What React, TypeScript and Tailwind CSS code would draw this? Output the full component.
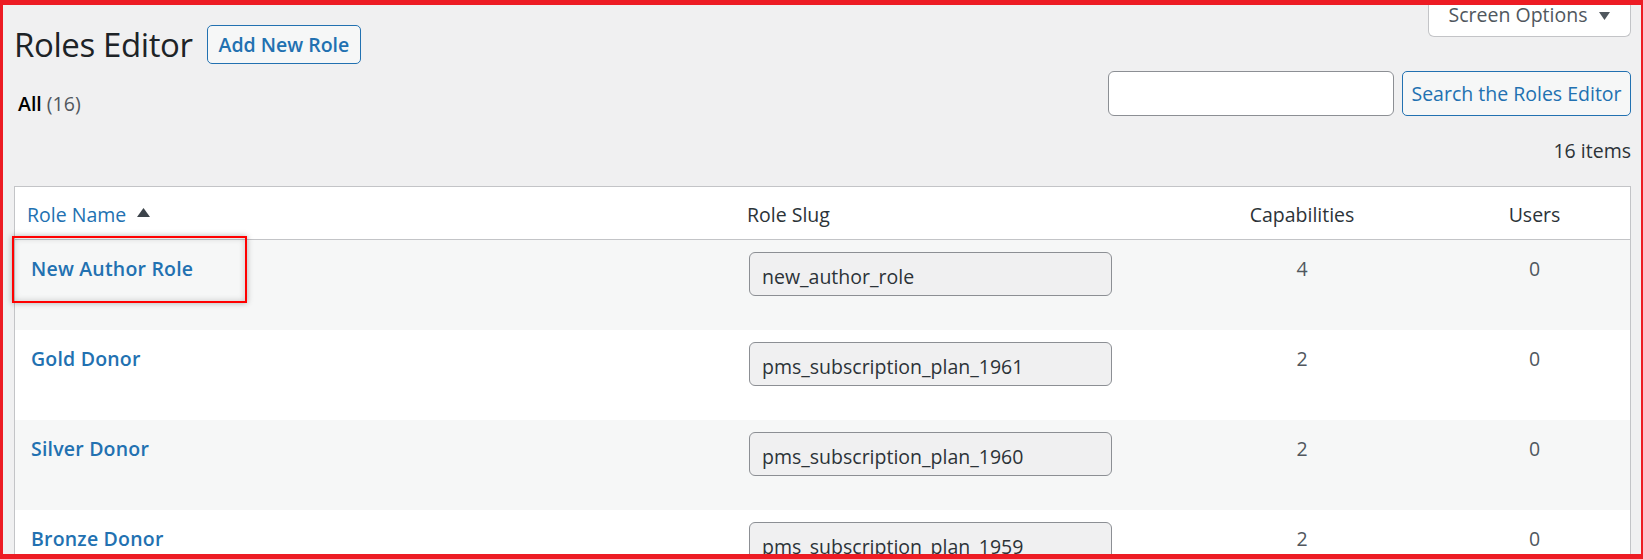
import React from 'react';

type Role = {
  name: string;
  slug: string;
  caps: number;
  users: number;
};

const roles: Role[] = [
  { name: 'New Author Role', slug: 'new_author_role', caps: 4, users: 0 },
  { name: 'Gold Donor', slug: 'pms_subscription_plan_1961', caps: 2, users: 0 },
  { name: 'Silver Donor', slug: 'pms_subscription_plan_1960', caps: 2, users: 0 },
  { name: 'Bronze Donor', slug: 'pms_subscription_plan_1959', caps: 2, users: 0 },
];

const SortUp = () => (
  <svg width="13" height="9" viewBox="0 0 13 9" className="ml-[11px] mt-[-4px]">
    <path d="M6.5 0 L13 9 L0 9 Z" fill="#3c434a" />
  </svg>
);

const CaretDown = () => (
  <svg width="11" height="8" viewBox="0 0 11 8" className="mt-[9px]">
    <path d="M0 0 L11 0 L5.5 8 Z" fill="#50575e" />
  </svg>
);

const RoleRow: React.FC<{ role: Role; striped: boolean }> = ({ role, striped }) => (
  <div
    className={
      'grid grid-cols-[719px_431px_274px_1fr] h-[90px] ' + (striped ? 'bg-[#f6f7f7]' : 'bg-white')
    }>
    <div className="pl-[16px] pt-[14px] leading-[30px]">
      <a className="font-semibold text-[#2271b1] tracking-[0.2px]">{role.name}</a>
    </div>
    <div className="pl-[15px] pt-[12px]">
      <input
        readOnly
        value={role.slug}
        className="w-[363px] h-[44px] pt-[5px] px-[12px] leading-[26px] border border-[#8c8f94] rounded-[6px] bg-[#f0f0f1] text-[#2c3338] outline-none"
      />
    </div>
    <div className="pt-[14px] leading-[30px] text-center text-[#50575e]">{role.caps}</div>
    <div className="pt-[14px] leading-[30px] text-center text-[#50575e]">{role.users}</div>
  </div>
);

export default function App() {
  return (
    <div className="relative w-[1643px] h-[559px] overflow-hidden bg-[#f0f0f1] font-['Open_Sans',sans-serif] text-[19.5px] leading-[24px] text-[#3c434a]">
      <div className="ml-[14px] mr-[12px]">
        {/* title row */}
        <div className="flex justify-between h-[64px]">
          <div className="flex items-center pt-[25px]">
            <h1 className="text-[33px] tracking-[-0.4px] leading-[39px] text-[#1d2327]">Roles Editor</h1>
            <button className="ml-[14px] h-[39px] px-[11px] leading-[37px] border border-[#2271b1] rounded-[5px] bg-[#f6f7f7] text-[#2271b1] font-semibold">
              Add New Role
            </button>
          </div>
          <div className="h-[37px] w-[203px] bg-white border border-t-0 border-[#c3c4c7] rounded-b-[6px] flex justify-center gap-[12px] pt-[3px] text-[#50575e]">
            <span>Screen Options</span>
            <CaretDown />
          </div>
        </div>

        {/* views + search */}
        <div className="mt-[7px] h-[45px] flex justify-between items-end">
          <div className="pl-[4px]">
            <span className="font-semibold text-black">All</span>{' '}
            <span className="text-[#50575e]">(16)</span>
          </div>
          <div className="flex">
            <input className="w-[286px] h-[45px] border border-[#8c8f94] rounded-[6px] bg-white outline-none" />
            <button className="ml-[8px] w-[229px] h-[45px] border border-[#2271b1] rounded-[5px] bg-[#f6f7f7] text-[#2271b1]">
              Search the Roles Editor
            </button>
          </div>
        </div>

        <div className="h-[70px] pt-[23px] text-right text-[#2c3338]">16 items</div>

        {/* table */}
        <div className="border border-[#c3c4c7] bg-white">
          <div className="grid grid-cols-[719px_431px_274px_1fr] h-[53px] items-center pt-[3px] border-b border-[#c3c4c7] text-[#2c3338]">
            <div className="pl-[12px] flex items-center text-[#2271b1]">
              <span>Role Name</span>
              <SortUp />
            </div>
            <div className="pl-[13px]">Role Slug</div>
            <div className="text-center">Capabilities</div>
            <div className="text-center">Users</div>
          </div>
          {roles.map((role, idx) => (
            <RoleRow key={role.slug} role={role} striped={idx % 2 === 0} />
          ))}
        </div>
      </div>

      {/* annotation box */}
      <div className="absolute left-[12px] top-[236px] w-[235px] h-[67px] border-2 border-[#ff0000] shadow-[0_0_6px_rgba(0,0,0,0.3),inset_0_0_6px_rgba(0,0,0,0.2)] pointer-events-none" />
      {/* screenshot frame */}
      <div className="absolute inset-0 border-t-[5px] border-l-[3px] border-r-[2px] border-b-[5px] border-[#ed1c24] pointer-events-none" />
    </div>
  );
}
